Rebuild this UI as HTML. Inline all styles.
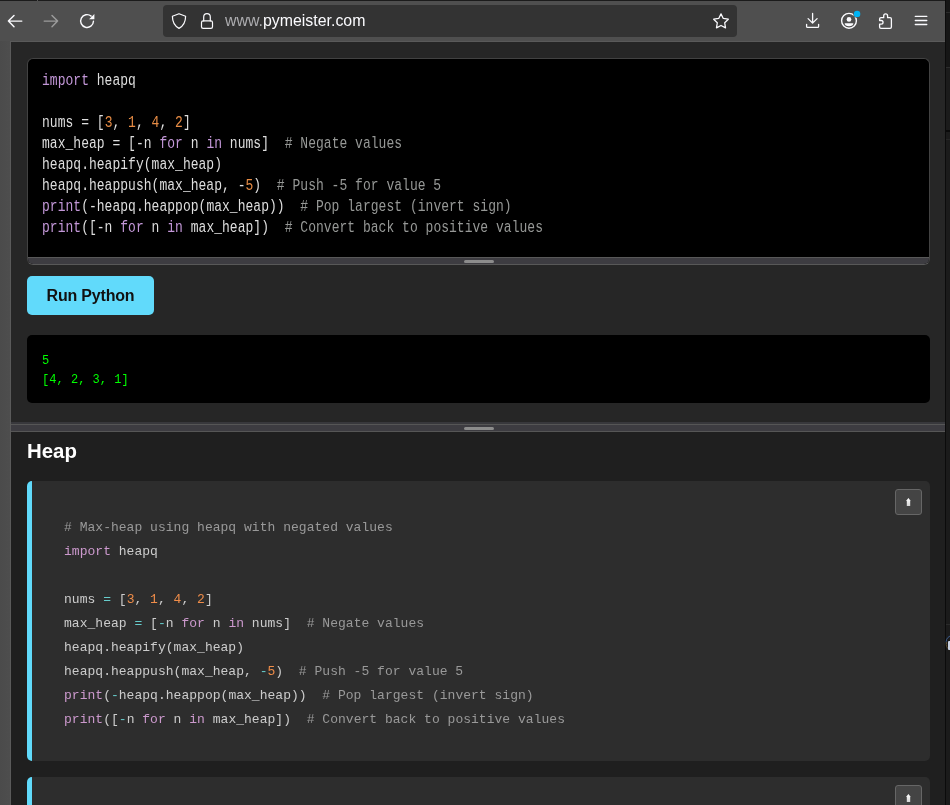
<!DOCTYPE html>
<html><head><meta charset="utf-8">
<style>
*{margin:0;padding:0;box-sizing:border-box}
html,body{width:950px;height:805px;overflow:hidden;background:#1c1c1c;font-family:"Liberation Sans",sans-serif}
.a{position:absolute}
#topline{left:0;top:0;width:945px;height:1px;background:#1b1b1b}
#toolbar{left:0;top:1px;width:945px;height:40px;background:#4f4f4f}
#leftstrip{left:0;top:41px;width:11px;height:764px;background:linear-gradient(90deg,#4b4b4b,#4e4e4e)}
#frameline-t{left:10px;top:41px;width:935px;height:1px;background:#5a5a5a}
#frameline-l{left:10px;top:41px;width:1px;height:764px;background:#5a5a5a}
#rightwin{left:945px;top:0;width:5px;height:805px;background:#1c1c1c;border-left:1px solid #0e0e0e}
#urlbar{left:163px;top:5px;width:574px;height:32px;background:#333333;border-radius:4px}
#urltext{left:225px;top:10px;will-change:transform;font-size:15.9px;line-height:22px;color:#fbfbfe;white-space:pre}
#urltext span{color:#adadb0}
#toppanel{left:11px;top:42px;width:934px;height:380px;background:#262626}
#editor{left:27px;top:58px;width:903px;height:207px;border:1px solid #424242;border-bottom-color:#585858;border-radius:6px;background:#000;overflow:hidden}
#editbar{left:0;bottom:0;width:100%;height:7px;background:#3d3c41;border-top:1px solid #585858}
#grip{left:436px;top:2px;width:30px;height:3px;border-radius:2px;background:#8c8c8c}
.code{font-family:"Liberation Mono",monospace;white-space:pre;letter-spacing:0.026px}
.c1l{left:42px;will-change:transform;transform-origin:0 11px;transform:scaleY(1.22);font-size:13px;line-height:13px;height:15px;color:#dedede}
.c1l .k1{color:#c397d8}.c1l .n1{color:#e78c45}.c1l .c1{color:#969896}
.k1{color:#cc99cd}.n1{color:#f08d49}.c1{color:#999999}
#runbtn{left:27px;top:276px;width:127px;height:39px;background:#61dafb;border-radius:5px;color:#111;font-weight:bold;font-size:16px;letter-spacing:-0.2px;will-change:transform;line-height:39px;text-align:center}
#output{left:27px;top:335px;width:903px;height:68px;background:#000;border-radius:5px}
#code2{left:42px;top:352px;will-change:transform;font-size:12px;line-height:19px;color:#00ff00}
#sep{left:11px;top:422px;width:934px;height:10px;background:#3d3c41}
#sep1{left:11px;top:422px;width:934px;height:2px;background:#38383c}
#sep2{left:11px;top:424px;width:934px;height:1px;background:#565656}
#sep3{left:11px;top:431px;width:934px;height:1px;background:#565656}
#grip2{left:464px;top:427px;width:30px;height:3px;border-radius:2px;background:#8c8c8c}
#botpanel{left:11px;top:432px;width:934px;height:373px;background:#1f1f1f}
#heading{left:27px;top:438px;will-change:transform;font-size:20.4px;font-weight:bold;color:#ffffff;line-height:26px}
.block{background:#2d2d2d;border-left:5px solid #61dafb;border-radius:5px}
#block1{left:27px;top:481px;width:903px;height:280px}
#block2{left:27px;top:777px;width:903px;height:60px}
.copy{width:27px;height:26px;background:#444;border:1px solid #666;border-radius:3px}
#code3{left:64px;top:516px;will-change:transform;font-size:13px;line-height:24px;color:#cccccc}
.o{color:#67cdcc}
</style></head><body>
<div class="a" id="topline"></div>
<div class="a" style="left:37px;top:0;width:1px;height:1px;background:#555"></div>
<div class="a" id="toolbar"></div>
<div class="a" id="leftstrip"></div>
<div class="a" id="rightwin"></div>
<div class="a" style="left:945px;top:0;width:1px;height:805px;background:#0b0b0b"></div>
<div class="a" style="left:946px;top:0;width:4px;height:67px;background:#161616"></div>
<div class="a" style="left:946px;top:67px;width:4px;height:738px;background:#1b1b1b"></div>
<div class="a" style="left:946px;top:12px;width:4px;height:1px;background:#2a2a2a"></div>
<div class="a" style="left:946px;top:67px;width:4px;height:1px;background:#2c2c2c"></div>
<div class="a" style="left:946px;top:130px;width:4px;height:2px;background:#0a0a0a"></div>
<div class="a" style="left:946px;top:139px;width:4px;height:1px;background:#262626"></div>
<div class="a" style="left:946px;top:624px;width:4px;height:1px;background:#2a2a2a"></div>
<svg class="a" style="left:945px;top:630px" width="5" height="24" viewBox="0 0 5 24"><path d="M1.5 14A7 7 0 0 1 5 6" stroke="#3c5c8c" stroke-width="1" fill="none"/><path d="M1.5 12A7 7 0 0 0 5 20" stroke="#5c4c2c" stroke-width="1" fill="none"/><rect x="3" y="11" width="2.5" height="9" rx="1" fill="#c8d0e0"/></svg>

<div class="a" id="urlbar"></div>
<svg class="a" style="left:0;top:0" width="945" height="41" viewBox="0 0 945 41" fill="none" stroke="#fbfbfe" stroke-width="1.3" stroke-linecap="round" stroke-linejoin="round">
<path stroke-width="1.45" d="M8.4 21.1H21.8M14 15.5L8.4 21.1L14 26.7"/>
<path stroke="#9c9c9c" stroke-width="1.45" d="M44.2 21.1H57.6M52 15.5L57.6 21.1L52 26.7"/>
<path stroke-width="1.4" d="M93.45 21.2A6.4 6.4 0 1 1 91.16 16.1"/>
<path fill="#fbfbfe" stroke="none" d="M89.1 19.3L94.4 13.9V19.3Z"/>
<path stroke-width="1.2" d="M179 13.7L185.6 16.3C185.6 21.6 183.4 26 179 28.4C174.6 26 172.4 21.6 172.4 16.3Z"/>
<rect x="201.5" y="20.9" width="11" height="7.5" rx="1.6" stroke-width="1.2"/>
<path stroke-width="1.2" d="M203.7 20.9V17A3.3 3.3 0 0 1 210.3 17V20.9"/>
<path stroke-width="1.25" d="M721.00 13.90L723.29 18.44L728.32 19.22L724.71 22.81L725.53 27.83L721.00 25.50L716.47 27.83L717.29 22.81L713.68 19.22L718.71 18.44Z"/>
<path d="M812.6 13.4V22.8M808.1 18.6L812.6 23.1L817.1 18.6M806.6 24.3V26.4Q806.6 27.4 807.6 27.4H817.6Q818.6 27.4 818.6 26.4V24.3"/>
<circle cx="849" cy="20.8" r="7.4" stroke-width="1.4"/>
<circle cx="849" cy="19.4" r="2.35" fill="#fbfbfe" stroke="none"/>
<path fill="#fbfbfe" stroke="none" d="M844.6 23.3H853.4C853.4 25 851.5 26.3 849 26.3C846.5 26.3 844.6 25 844.6 23.3Z"/>
<circle cx="857.1" cy="13.9" r="3.8" fill="#4f4f4f" stroke="none"/>
<circle cx="857.1" cy="13.9" r="3.2" fill="#00b3f4" stroke="none"/>
<path d="M879.6 19Q879.6 17.65 881 17.65H883.7V15.9A1.95 1.95 0 0 1 887.6 15.9V17.65H890Q891.4 17.65 891.4 19V27Q891.4 28.3 890 28.3H881Q879.6 28.3 879.6 27V24.2H881.2A1.85 1.85 0 0 0 881.2 20.5H879.6Z"/>
<path d="M915.3 16.4H926.8M915.3 20.5H926.8M915.3 24.5H926.8"/>
</svg>
<div class="a" id="urltext"><span>www.</span>pymeister.com</div>

<div class="a" id="toppanel"></div>
<div class="a" id="frameline-t"></div>
<div class="a" id="frameline-l"></div>
<div class="a" id="editor"><div class="a" id="editbar"><div class="a" id="grip"></div></div></div>
<div class="a code c1l" style="top:75px"><span class="k1">import</span> heapq</div>
<div class="a code c1l" style="top:117px">nums = [<span class="n1">3</span>, <span class="n1">1</span>, <span class="n1">4</span>, <span class="n1">2</span>]</div>
<div class="a code c1l" style="top:138px">max_heap = [-n <span class="k1">for</span> n <span class="k1">in</span> nums]  <span class="c1"># Negate values</span></div>
<div class="a code c1l" style="top:159px">heapq.heapify(max_heap)</div>
<div class="a code c1l" style="top:180px">heapq.heappush(max_heap, -<span class="n1">5</span>)  <span class="c1"># Push -5 for value 5</span></div>
<div class="a code c1l" style="top:201px"><span class="k1">print</span>(-heapq.heappop(max_heap))  <span class="c1"># Pop largest (invert sign)</span></div>
<div class="a code c1l" style="top:222px"><span class="k1">print</span>([-n <span class="k1">for</span> n <span class="k1">in</span> max_heap])  <span class="c1"># Convert back to positive values</span></div>
<div class="a" id="runbtn">Run Python</div>
<div class="a" id="output"></div>
<div class="a code" id="code2">5
[4, 2, 3, 1]</div>

<div class="a" id="sep"></div>
<div class="a" id="sep1"></div>
<div class="a" id="sep2"></div>
<div class="a" id="sep3"></div>
<div class="a" id="grip2"></div>
<div class="a" id="botpanel"></div>
<div class="a" id="heading">Heap</div>
<div class="a block" id="block1"></div>
<div class="a copy" style="left:895px;top:489px"></div>
<svg class="a" style="left:895px;top:489px" width="27" height="26" viewBox="0 0 27 26"><defs><linearGradient id="ag0" x1="0" y1="0" x2="0" y2="1"><stop offset="0" stop-color="#ffffff"/><stop offset="1" stop-color="#d4d4d4"/></linearGradient></defs><path fill="url(#ag0)" d="M11 12L13.4 8.9L15.8 12H15.2V17H11.8V12Z"/></svg>
<div class="a code" id="code3"><span class="c1"># Max-heap using heapq with negated values</span>
<span class="k1">import</span> heapq

nums <span class="o">=</span> [<span class="n1">3</span>, <span class="n1">1</span>, <span class="n1">4</span>, <span class="n1">2</span>]
max_heap <span class="o">=</span> [<span class="o">-</span>n <span class="k1">for</span> n <span class="k1">in</span> nums]  <span class="c1"># Negate values</span>
heapq.heapify(max_heap)
heapq.heappush(max_heap, <span class="o">-</span><span class="n1">5</span>)  <span class="c1"># Push -5 for value 5</span>
<span class="k1">print</span>(<span class="o">-</span>heapq.heappop(max_heap))  <span class="c1"># Pop largest (invert sign)</span>
<span class="k1">print</span>([<span class="o">-</span>n <span class="k1">for</span> n <span class="k1">in</span> max_heap])  <span class="c1"># Convert back to positive values</span></div>
<div class="a block" id="block2"></div>
<div class="a copy" style="left:895px;top:785px"></div>
<svg class="a" style="left:895px;top:785px" width="27" height="26" viewBox="0 0 27 26"><defs><linearGradient id="ag1" x1="0" y1="0" x2="0" y2="1"><stop offset="0" stop-color="#ffffff"/><stop offset="1" stop-color="#d4d4d4"/></linearGradient></defs><path fill="url(#ag1)" d="M11 12L13.4 8.9L15.8 12H15.2V17H11.8V12Z"/></svg>
</body></html>
